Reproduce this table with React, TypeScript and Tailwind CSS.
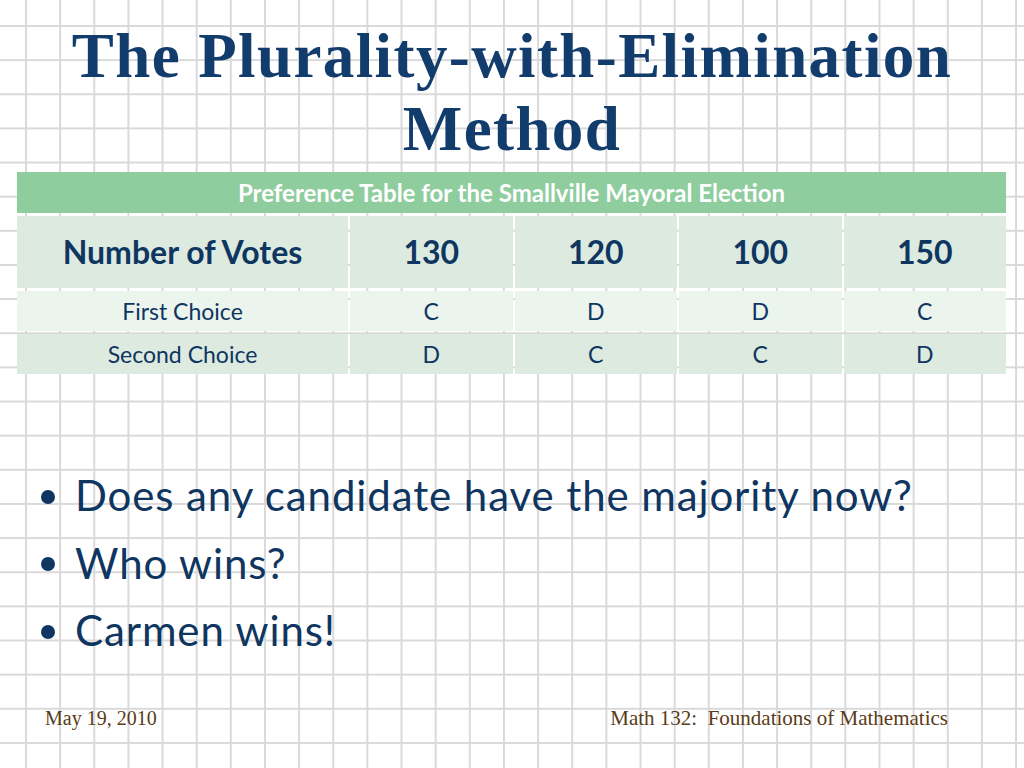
import React from 'react';

const votes = ['130', '120', '100', '150'];
const firstChoice = ['C', 'D', 'D', 'C'];
const secondChoice = ['D', 'C', 'C', 'D'];

const cell = 'flex items-center justify-center';

const App: React.FC = () => {
  return (
    <div className="w-[1024px] h-[768px] overflow-hidden relative bg-white bg-[linear-gradient(to_right,#d9d9d9_1.5px,transparent_1.5px),linear-gradient(to_bottom,#d9d9d9_1.5px,transparent_1.5px)] bg-[size:34.15px_34.15px] bg-[position:25px_25px]">
      <div className="flex flex-col h-full">
        {/* Title */}
        <h1 className="pt-[20px] text-center font-['Liberation_Serif',serif] font-bold text-[#123c6c] text-[63px] leading-[73px] tracking-[1.4px]">
          The Plurality-with-Elimination
          <br />
          Method
        </h1>

        {/* Preference table */}
        <div className="mt-[6px] ml-[17px] w-[989px] flex flex-col gap-[3px] font-['Lato',sans-serif] text-[#0f3561]">
          <div className="h-[41px] bg-[#8fcd9f] text-white font-bold text-[24px] flex items-center justify-center">
            Preference Table for the Smallville Mayoral Election
          </div>
          <div className="h-[72px] grid grid-cols-[331px_1fr_1fr_1fr_1fr] gap-[2px] font-bold text-[32px]">
            <div className={`${cell} bg-[#dceadf]`}>Number of Votes</div>
            {votes.map((v) => (
              <div key={v} className={`${cell} bg-[#dceadf]`}>{v}</div>
            ))}
          </div>
          <div className="h-[40px] grid grid-cols-[331px_1fr_1fr_1fr_1fr] gap-[2px] text-[23px]">
            <div className={`${cell} bg-[#ebf4ed]`}>First Choice</div>
            {firstChoice.map((c, i) => (
              <div key={i} className={`${cell} bg-[#ebf4ed]`}>{c}</div>
            ))}
          </div>
          <div className="h-[40px] grid grid-cols-[331px_1fr_1fr_1fr_1fr] gap-[2px] text-[23px]">
            <div className={`${cell} bg-[#dceadf]`}>Second Choice</div>
            {secondChoice.map((c, i) => (
              <div key={i} className={`${cell} bg-[#dceadf]`}>{c}</div>
            ))}
          </div>
        </div>

        {/* Bullets */}
        <ul className="mt-[88px] ml-[40px] flex flex-col font-['Lato',sans-serif] text-[#0f3561] text-[42px] leading-[67.5px] tracking-[0.9px]">
          {['Does any candidate have the majority now?', 'Who wins?', 'Carmen wins!'].map((t) => (
            <li key={t} className="flex items-center">
              <span className="w-[35px] flex">
                <span className="ml-[1px] mt-[2px] w-[14px] h-[14px] rounded-full bg-[#0f3561]" />
              </span>
              <span>{t}</span>
            </li>
          ))}
        </ul>

        {/* Footer */}
        <div className="mt-auto mb-[34px] flex justify-between items-baseline pl-[45px] pr-[76px] font-['Liberation_Serif',serif] text-[#5a3b18]">
          <span className="text-[20px]">May 19, 2010</span>
          <span className="text-[21px]">Math 132:&nbsp; Foundations of Mathematics</span>
        </div>
      </div>
    </div>
  );
};

export default App;
